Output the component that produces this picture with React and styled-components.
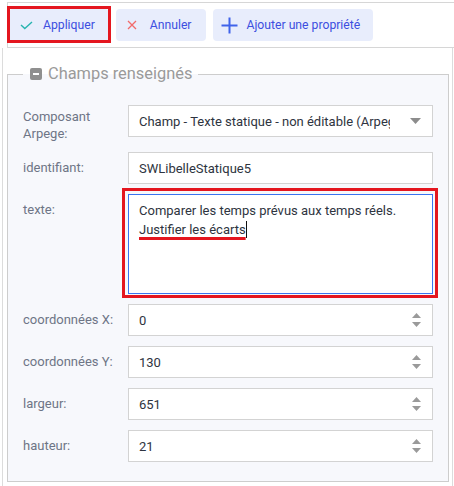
import React from 'react'
import styled, { createGlobalStyle, css } from 'styled-components'

const GlobalStyle = createGlobalStyle`
  html, body {
    margin: 0;
    padding: 0;
    background: #fff;
  }
  body {
    font-family: Roboto, "Liberation Sans", Arial, sans-serif;
  }
  * { box-sizing: border-box; }
`

const Page = styled.div`
  width: 454px;
  height: 486px;
  overflow: hidden;
  padding-top: 2px;
`

const Toolbar = styled.div`
  margin-left: 7px;
  height: 46px;
  border: 1px solid #d6d6d6;
  border-right: none;
  display: flex;
  align-items: center;
  gap: 7px;
  padding-left: 1px;
`

const ToolButton = styled.button`
  position: relative;
  height: 32px;
  border: none;
  border-radius: 4px;
  background: #e8edfc;
  color: #3d4fe0;
  font-family: inherit;
  font-size: 12.2px;
  display: inline-flex;
  align-items: center;
  gap: ${p => p.gap || 10}px;
  padding: 0 ${p => p.padRight || 14}px 0 ${p => p.padLeft || 11}px;
  cursor: pointer;
  /* red annotation frame drawn round the active button */
  ${p => p.highlighted && css`
    &::after {
      content: '';
      position: absolute;
      top: -3px;
      left: -2px;
      right: -2px;
      bottom: -2px;
      border: 3px solid #e4161f;
      pointer-events: none;
    }
  `}
`

const Body = styled.div`
  margin-left: 2px;
  width: 451px;
  height: 440px;
  border-left: 1px solid #dcdcdc;
  border-right: 1px solid #dcdcdc;
  padding: 16px 3px 0 4px;
`

const Fieldset = styled.fieldset`
  margin: 0;
  border: 1px solid #cdcdcd;
  background: #f7f8fc;
  padding: 21px 15px 19px 15px;
  min-width: 0;
`

const Legend = styled.legend`
  display: flex;
  align-items: center;
  gap: 6px;
  padding: 0 6px 0 7px;
  font-size: 16.4px;
  line-height: 20px;
  color: #9a9a9a;
`

const Form = styled.div`
  display: grid;
  grid-template-columns: 105px 305px;
  row-gap: 10px;
  align-items: start;
`

const Label = styled.div`
  font-size: 13px;
  color: #6e7586;
  line-height: 32px;
  ${p => p.multiline && css`
    line-height: 17px;
    padding-top: 3px;
  `}
`

const Control = styled.div`
  height: 32px;
  border: 1px solid #d3d3d3;
  background: #fff;
  display: flex;
  align-items: center;
  padding: 0 11px 0 10px;
  font-size: 13px;
  color: #2e3440;
`

const Value = styled.span`
  flex: 1;
  min-width: 0;
  overflow: hidden;
  white-space: nowrap;
`

const ArrowSlot = styled.span`
  display: flex;
  margin-left: 20px;
`

const TextBox = styled.div`
  position: relative;
  height: 100px;
  border: 1px solid #3b74f0;
  background: #fff;
  padding: 6px 10px;
  font-size: 13px;
  line-height: 19px;
  color: #2e3440;

  /* red annotation frame round the edited field */
  &::after {
    content: '';
    position: absolute;
    top: -7px;
    left: -7px;
    right: -6px;
    bottom: -5px;
    border: 3px solid #e4161f;
    pointer-events: none;
  }
`

const Marked = styled.span`
  text-decoration: underline #e4161f;
  text-decoration-thickness: 3px;
  text-underline-offset: 3px;
  text-decoration-skip-ink: none;
  padding-right: 2px;
`

const Caret = styled.span`
  display: inline-block;
  width: 1px;
  height: 17px;
  background: #111;
  vertical-align: -4px;
`

const CheckIcon = () => (
  <svg width="13" height="9" viewBox="0 0 13 9">
    <polyline points="1,4 4.8,7.6 12,1" fill="none" stroke="#28b4b0" strokeWidth="1.4" />
  </svg>
)

const CloseIcon = () => (
  <svg width="10" height="10" viewBox="0 0 10 10">
    <path d="M1 1L9 9M9 1L1 9" stroke="#f26a6a" strokeWidth="1.3" />
  </svg>
)

const PlusIcon = () => (
  <svg width="17" height="17" viewBox="0 0 17 17">
    <path d="M8.5 0.5V16.5M0.5 8.5H16.5" stroke="#3f63ea" strokeWidth="2" />
  </svg>
)

const MinusBox = () => (
  <svg width="12" height="12" viewBox="0 0 12 12">
    <rect x="0" y="0" width="12" height="12" rx="2" fill="#8f8f8f" />
    <path d="M3 6H9" stroke="#fff" strokeWidth="2" />
  </svg>
)

const DropArrow = () => (
  <svg width="11" height="6" viewBox="0 0 11 6">
    <polygon points="0,0 11,0 5.5,6" fill="#8c8c8c" />
  </svg>
)

const Spinner = () => (
  <svg width="9" height="15" viewBox="0 0 9 15">
    <polygon points="4.5,0 9,5 0,5" fill="#9a9a9a" />
    <polygon points="0,9 9,9 4.5,14" fill="#9a9a9a" />
  </svg>
)

function SelectField({ value }) {
  return (
    <Control>
      <Value>{value}</Value>
      <ArrowSlot><DropArrow /></ArrowSlot>
    </Control>
  )
}

function NumberField({ value }) {
  return (
    <Control>
      <Value>{value}</Value>
      <Spinner />
    </Control>
  )
}

const numbers = [
  ['coordonnées X:', '0'],
  ['coordonnées Y:', '130'],
  ['largeur:', '651'],
  ['hauteur:', '21'],
]

export default function App() {
  return (
    <Page>
      <GlobalStyle />
      <Toolbar>
        <ToolButton highlighted>
          <CheckIcon />
          Appliquer
        </ToolButton>
        <ToolButton gap={13}>
          <CloseIcon />
          Annuler
        </ToolButton>
        <ToolButton padLeft={8} padRight={13} gap={9}>
          <PlusIcon />
          Ajouter une propriété
        </ToolButton>
      </Toolbar>
      <Body>
        <Fieldset>
          <Legend>
            <MinusBox />
            Champs renseignés
          </Legend>
          <Form>
            <Label multiline>Composant<br />Arpege:</Label>
            <SelectField value="Champ - Texte statique - non éditable (Arpege)" />

            <Label>identifiant:</Label>
            <Control><Value>SWLibelleStatique5</Value></Control>

            <Label>texte:</Label>
            <TextBox>
              Comparer les temps prévus aux temps réels.<br />
              <Marked>Justifier les écarts<Caret /></Marked>
            </TextBox>

            {numbers.map(([label, value]) => (
              <React.Fragment key={label}>
                <Label>{label}</Label>
                <NumberField value={value} />
              </React.Fragment>
            ))}
          </Form>
        </Fieldset>
      </Body>
    </Page>
  )
}
